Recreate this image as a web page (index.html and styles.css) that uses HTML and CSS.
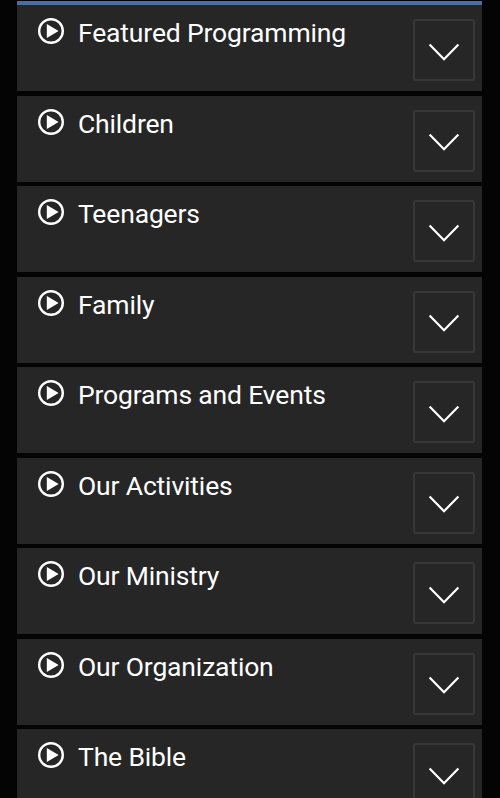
FILE: index.html
```
<!DOCTYPE html>
<html lang="en">
<head>
    <meta charset="UTF-8">
    <meta name="viewport" content="width=device-width, initial-scale=1.0">
    <title>Video Categories</title>
    <link rel="stylesheet" href="styles.css">
</head>
<body>
    <svg class="symbols" aria-hidden="true">
        <symbol id="play" viewBox="0 0 26 26">
            <circle cx="13" cy="13" r="11.8" fill="none" stroke="#fff" stroke-width="2.4"/>
            <path d="M8.8 6.1v13.8L20.6 13z" fill="#fff"/>
        </symbol>
        <symbol id="chevron" viewBox="0 0 32 18">
            <path d="M1.6 1.6L16 16.2L30.4 1.6" fill="none" stroke="#fff" stroke-width="2.2"/>
        </symbol>
    </svg>

    <ul class="categories">
        <li class="category">
            <svg class="play"><use href="#play"/></svg>
            <span class="title">Featured Programming</span>
            <button class="toggle" aria-label="Expand"><svg class="chevron"><use href="#chevron"/></svg></button>
        </li>
        <li class="category">
            <svg class="play"><use href="#play"/></svg>
            <span class="title">Children</span>
            <button class="toggle" aria-label="Expand"><svg class="chevron"><use href="#chevron"/></svg></button>
        </li>
        <li class="category">
            <svg class="play"><use href="#play"/></svg>
            <span class="title">Teenagers</span>
            <button class="toggle" aria-label="Expand"><svg class="chevron"><use href="#chevron"/></svg></button>
        </li>
        <li class="category">
            <svg class="play"><use href="#play"/></svg>
            <span class="title">Family</span>
            <button class="toggle" aria-label="Expand"><svg class="chevron"><use href="#chevron"/></svg></button>
        </li>
        <li class="category">
            <svg class="play"><use href="#play"/></svg>
            <span class="title">Programs and Events</span>
            <button class="toggle" aria-label="Expand"><svg class="chevron"><use href="#chevron"/></svg></button>
        </li>
        <li class="category">
            <svg class="play"><use href="#play"/></svg>
            <span class="title">Our Activities</span>
            <button class="toggle" aria-label="Expand"><svg class="chevron"><use href="#chevron"/></svg></button>
        </li>
        <li class="category">
            <svg class="play"><use href="#play"/></svg>
            <span class="title">Our Ministry</span>
            <button class="toggle" aria-label="Expand"><svg class="chevron"><use href="#chevron"/></svg></button>
        </li>
        <li class="category">
            <svg class="play"><use href="#play"/></svg>
            <span class="title">Our Organization</span>
            <button class="toggle" aria-label="Expand"><svg class="chevron"><use href="#chevron"/></svg></button>
        </li>
        <li class="category">
            <svg class="play"><use href="#play"/></svg>
            <span class="title">The Bible</span>
            <button class="toggle" aria-label="Expand"><svg class="chevron"><use href="#chevron"/></svg></button>
        </li>
    </ul>
</body>
</html>
```
FILE: styles.css
```
* {
    box-sizing: border-box;
}
body {
    margin: 0;
    height: 798px;
    overflow: hidden;
    background-color: #040404;
    font-family: Roboto, sans-serif;
    color: #fff;
}
.symbols {
    display: none;
}
.categories {
    display: flex;
    flex-direction: column;
    gap: 4.5px;
    list-style: none;
    margin: 1px 18px 0 17px;
    padding: 0;
    border-top: 4px solid #4a6da7;
}
.category {
    display: flex;
    flex-shrink: 0;
    align-items: flex-start;
    height: 86px;
    padding: 13px 7px 0 21px;
    background-color: #262626;
}
.play {
    flex-shrink: 0;
    width: 26px;
    height: 26px;
}
.title {
    flex: 1;
    margin-left: 14px;
    font-size: 26.5px;
    line-height: 29px;
    letter-spacing: -0.16px;
    white-space: nowrap;
}
.toggle {
    display: flex;
    align-items: center;
    justify-content: center;
    width: 62px;
    height: 62px;
    margin-top: 1.3px;
    padding: 0;
    background: none;
    border: 2px solid #383838;
    border-radius: 3px;
    cursor: pointer;
}
.chevron {
    width: 32px;
    height: 18px;
    margin-top: 3px;
}
```
